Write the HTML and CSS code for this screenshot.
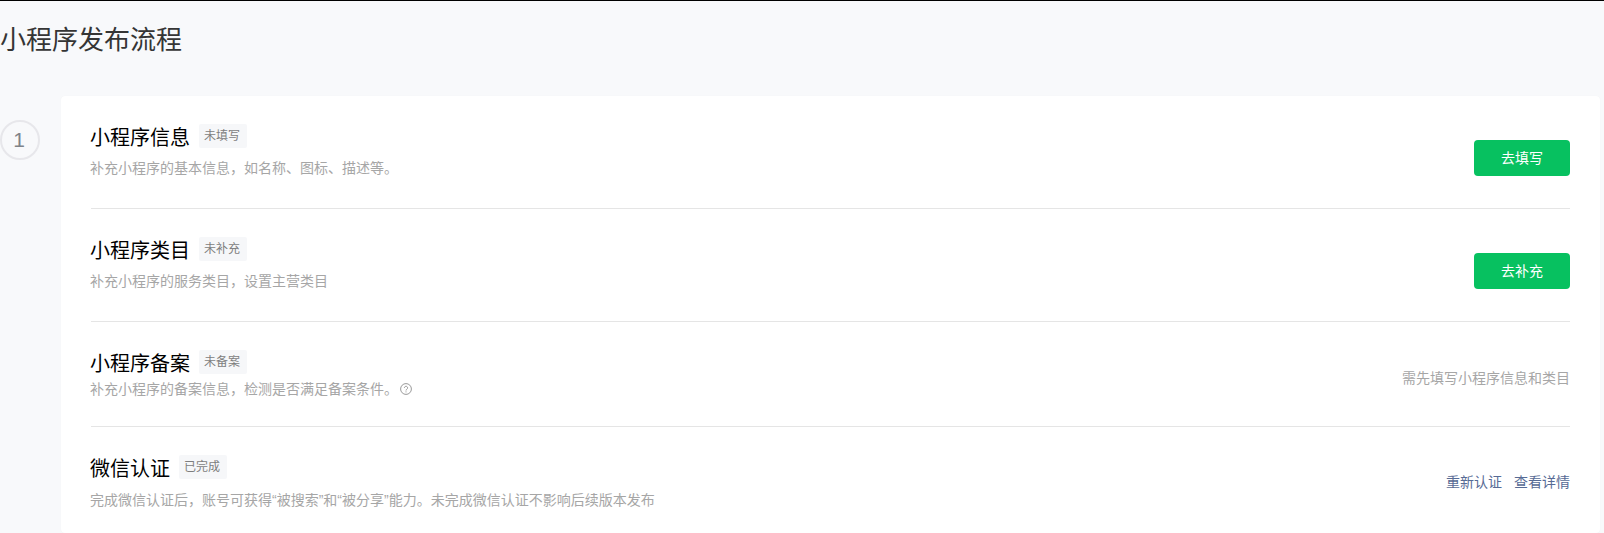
FILE: index.html
```html
<!DOCTYPE html>
<html lang="zh-CN">
<head>
<meta charset="utf-8">
<title>小程序发布流程</title>
<link rel="stylesheet" href="styles.css">
</head>
<body>
<div class="page">
  <h1 class="page-title">小程序发布流程</h1>
  <div class="step">
    <div class="step-num">1</div>
    <div class="card">
      <div class="row row-a">
        <div class="info">
          <div class="head"><span class="name">小程序信息</span><span class="tag">未填写</span></div>
          <p class="desc">补充小程序的基本信息，如名称、图标、描述等。</p>
        </div>
        <a class="btn">去填写</a>
      </div>
      <div class="row row-b">
        <div class="info">
          <div class="head"><span class="name">小程序类目</span><span class="tag">未补充</span></div>
          <p class="desc">补充小程序的服务类目，设置主营类目</p>
        </div>
        <a class="btn">去补充</a>
      </div>
      <div class="row row-c">
        <div class="info">
          <div class="head"><span class="name">小程序备案</span><span class="tag">未备案</span></div>
          <p class="desc desc-tight">补充小程序的备案信息，检测是否满足备案条件。<svg class="help" width="12" height="12" viewBox="0 0 12 12" fill="none" stroke="#9a9a9a"><circle cx="6" cy="6" r="5.4"/><path d="M4.4 4.9a1.6 1.6 0 1 1 2.5 1.3c-.6.4-.9.7-.9 1.3"/><path d="M6 8.4v1"/></svg></p>
        </div>
        <span class="hint">需先填写小程序信息和类目</span>
      </div>
      <div class="row row-d">
        <div class="info">
          <div class="head"><span class="name">微信认证</span><span class="tag">已完成</span></div>
          <p class="desc desc-loose">完成微信认证后，账号可获得“被搜索”和“被分享”能力。未完成微信认证不影响后续版本发布</p>
        </div>
        <div class="links"><a class="link">重新认证</a><a class="link">查看详情</a></div>
      </div>
    </div>
  </div>
</div>
</body>
</html>
```
FILE: styles.css
```css
* { box-sizing: border-box; }
html, body { margin: 0; height: 100%; }
body {
  background: #f8f9fb;
  border-top: 1px solid #000;
  overflow: hidden;
  font-family: "Liberation Sans", "Noto Sans CJK SC", sans-serif;
}
.page { display: flex; flex-direction: column; padding-right: 4px; }
.page-title {
  margin: 0;
  padding-top: 21px;
  height: 95px;
  font-size: 26px;
  line-height: 36px;
  font-weight: 400;
  color: #353535;
}
.step { display: flex; align-items: flex-start; height: 437px; }
.step-num {
  flex: none;
  width: 40px;
  height: 40px;
  margin-top: 24px;
  margin-right: 21px;
  padding-right: 2px;
  border: 2px solid #e7e7eb;
  border-radius: 50%;
  display: flex;
  align-items: center;
  justify-content: center;
  font-size: 21px;
  color: #7f8389;
}
.card {
  flex: 1;
  background: #fff;
  border-radius: 4px;
  padding: 0 30px;
  height: 437px;
  box-shadow: 0 0 1px rgba(0,0,0,.05);
}
.row {
  display: flex;
  align-items: flex-start;
  justify-content: space-between;
  padding-top: 28px;
  border-bottom: 1px solid #e5e5e5;
}
.row-a, .row-b { height: 113px; }
.row-c { height: 105px; }
.row-d { border-bottom: 0; height: 106px; }
.info { margin-left: -1px; }
.head { display: flex; align-items: flex-start; height: 24px; }
.name { padding-top: 2px; font-size: 20px; line-height: 24px; color: #000; }
.tag {
  margin-left: 9px;
  height: 24px;
  padding: 0 7px 0 5px;
  background: #f6f7f9;
  border-radius: 2px;
  font-size: 12px;
  line-height: 25px;
  color: #7e7e7e;
}
.desc {
  margin: 9px 0 0;
  font-size: 14px;
  line-height: 22px;
  color: #a6a6a6;
  display: flex;
  align-items: center;
}
.desc-tight { margin-top: 4px; }
.desc-loose { margin-top: 10px; }
.help { margin-left: 2px; }
.btn {
  flex: none;
  width: 96px;
  height: 36px;
  margin-top: 16px;
  background: #07c160;
  border-radius: 4px;
  color: #fff;
  font-size: 14px;
  line-height: 36px;
  text-align: center;
}
.hint { margin-top: 17px; font-size: 14px; line-height: 22px; color: #a6a6a6; }
.links { display: flex; gap: 12px; margin-top: 16px; }
.link { font-size: 14px; line-height: 22px; color: #576b95; }
```
